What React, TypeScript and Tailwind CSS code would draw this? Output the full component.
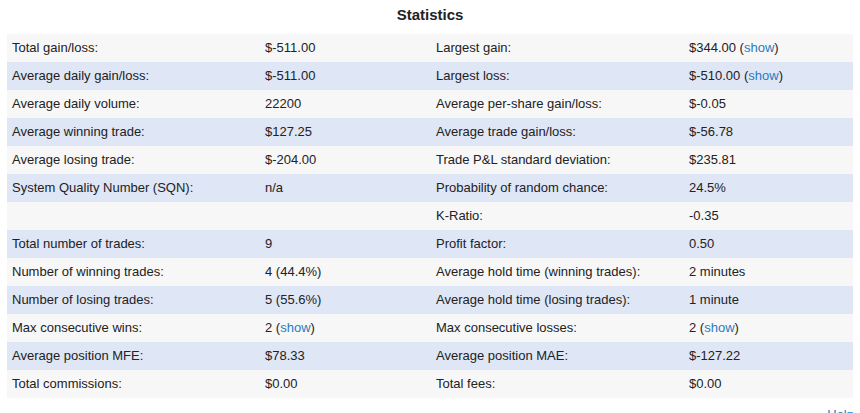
import React from 'react';

type Cell = { value: string; show?: boolean };
type Row = [string, Cell, string, Cell];

const rows: Row[] = [
  ['Total gain/loss:', { value: '$-511.00' }, 'Largest gain:', { value: '$344.00', show: true }],
  ['Average daily gain/loss:', { value: '$-511.00' }, 'Largest loss:', { value: '$-510.00', show: true }],
  ['Average daily volume:', { value: '22200' }, 'Average per-share gain/loss:', { value: '$-0.05' }],
  ['Average winning trade:', { value: '$127.25' }, 'Average trade gain/loss:', { value: '$-56.78' }],
  ['Average losing trade:', { value: '$-204.00' }, 'Trade P&L standard deviation:', { value: '$235.81' }],
  ['System Quality Number (SQN):', { value: 'n/a' }, 'Probability of random chance:', { value: '24.5%' }],
  ['', { value: '' }, 'K-Ratio:', { value: '-0.35' }],
  ['Total number of trades:', { value: '9' }, 'Profit factor:', { value: '0.50' }],
  ['Number of winning trades:', { value: '4 (44.4%)' }, 'Average hold time (winning trades):', { value: '2 minutes' }],
  ['Number of losing trades:', { value: '5 (55.6%)' }, 'Average hold time (losing trades):', { value: '1 minute' }],
  ['Max consecutive wins:', { value: '2', show: true }, 'Max consecutive losses:', { value: '2', show: true }],
  ['Average position MFE:', { value: '$78.33' }, 'Average position MAE:', { value: '$-127.22' }],
  ['Total commissions:', { value: '$0.00' }, 'Total fees:', { value: '$0.00' }],
];

const Value: React.FC<{ cell: Cell }> = ({ cell }) => (
  <>
    {cell.value}
    {cell.show && (
      <>
        {' ('}
        <a className="text-[#2a7bc0]">show</a>
        {')'}
      </>
    )}
  </>
);

export default function App() {
  return (
    <div
      className="w-[860px] h-[413px] bg-white overflow-hidden text-[#222] text-[13px]"
      style={{ fontFamily: '"Liberation Sans", Arial, sans-serif' }}
    >
      <h2 className="h-[34px] pt-[6px] text-center text-[15px] font-bold leading-[18px]">Statistics</h2>
      <div className="ml-[7px] w-[846px]">
        {rows.map((row, index) => (
          <div
            key={index}
            className={`grid grid-cols-[253px_171px_253px_169px] h-[28px] items-center ${
              index % 2 === 0 ? 'bg-[#f7f7f7]' : 'bg-[#dfe6f6]'
            }`}
          >
            <div className="pl-[5px]">{row[0]}</div>
            <div className="pl-[5px]"><Value cell={row[1]} /></div>
            <div className="pl-[5px]">{row[2]}</div>
            <div className="pl-[5px]"><Value cell={row[3]} /></div>
          </div>
        ))}
      </div>
      <div className="mt-[10px] pr-[6px] text-right text-[13px] text-[#2a7bc0] leading-[14px]">Help</div>
    </div>
  );
}
